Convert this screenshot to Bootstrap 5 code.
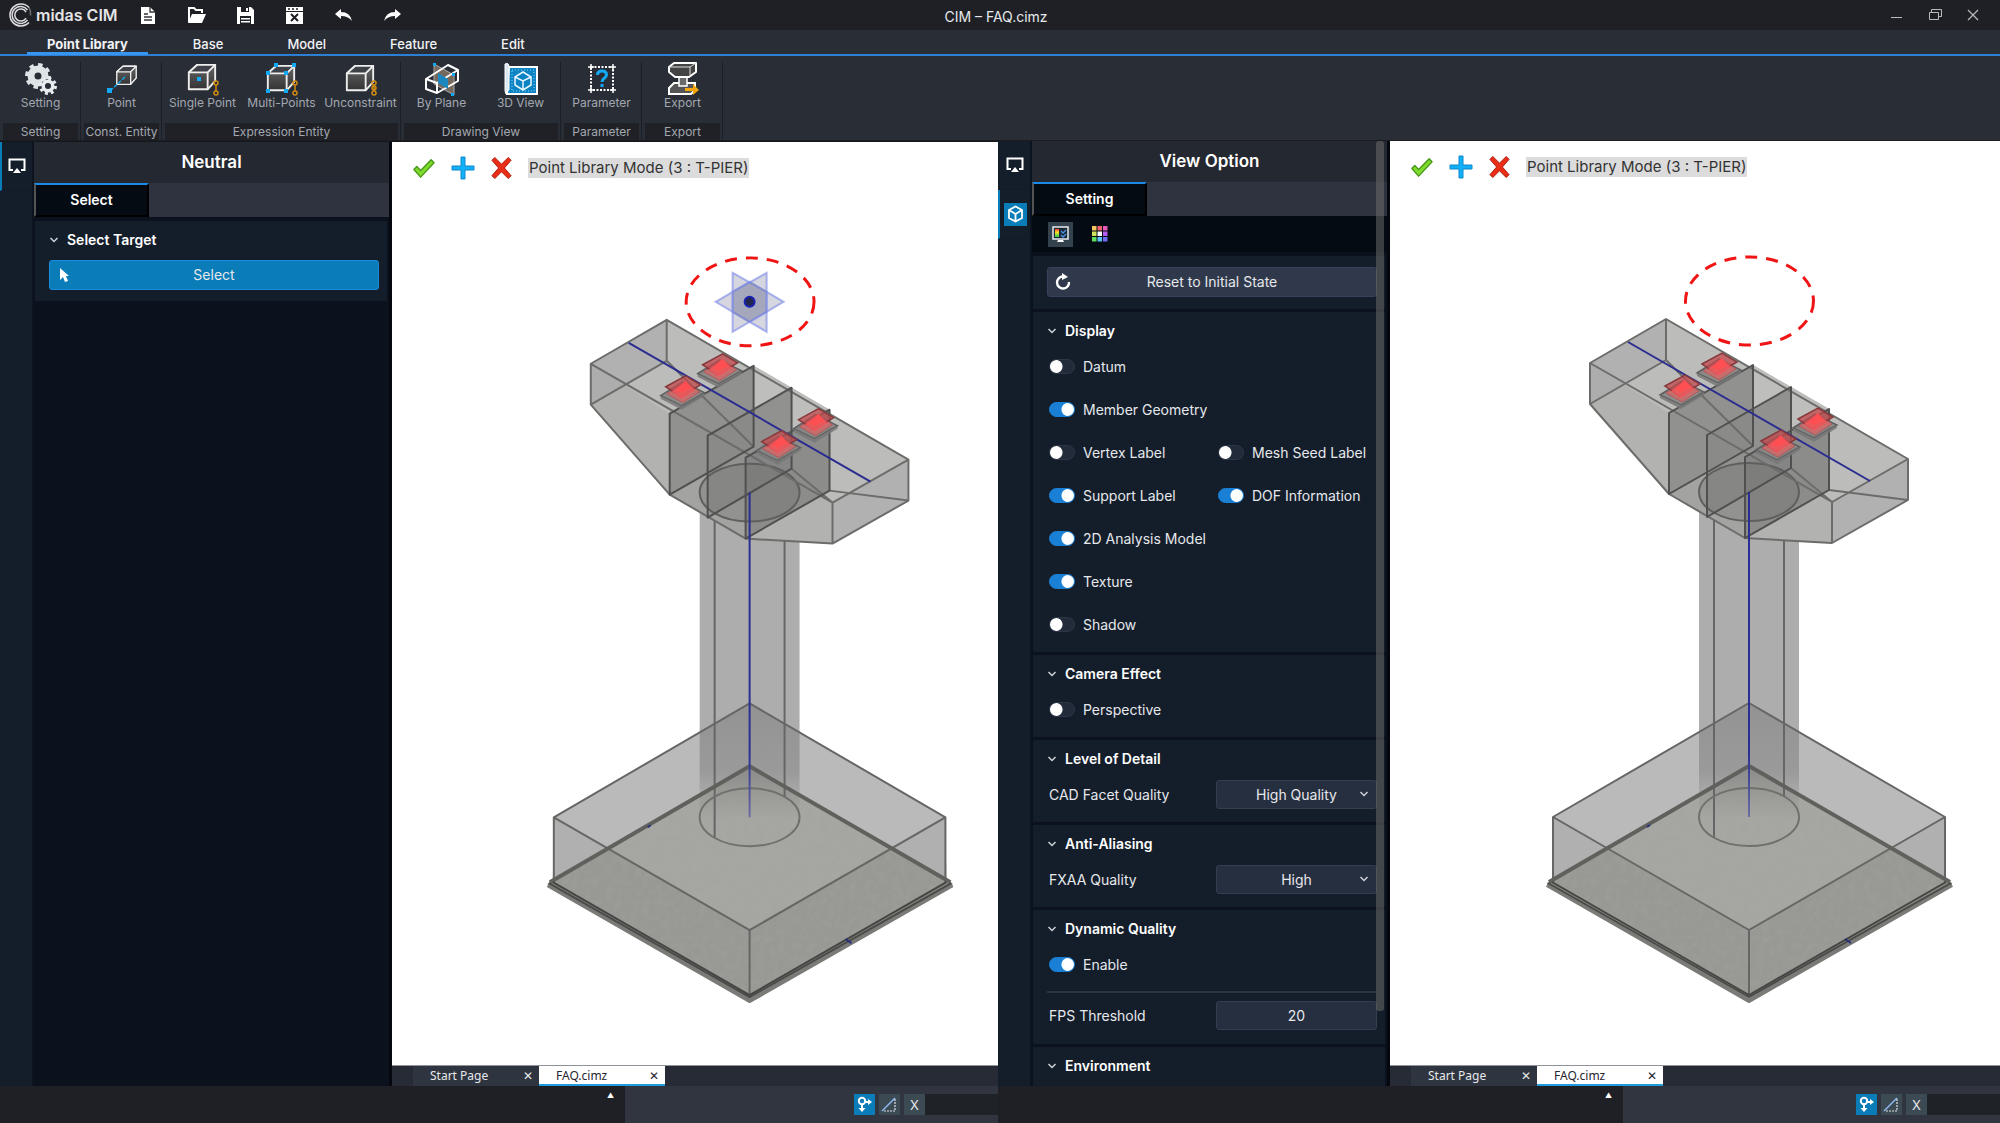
<!DOCTYPE html>
<html lang="en">
<head>
<meta charset="utf-8">
<meta name="viewport" content="width=device-width, initial-scale=1">
<title>CIM – FAQ.cimz</title>
<link rel="stylesheet" href="https://cdn.jsdelivr.net/npm/bootstrap@5.3.0/dist/css/bootstrap.min.css">
<style>
:root{--blue:#1b8ae6;--fill:#0a7cb8;--panel:#141e2b;--ink:#0b121d;--bar:#292d36;--night:#1f2025}
body{font-family:Inter,"Liberation Sans",sans-serif;font-size:13px;line-height:20px;color:#e6e8eb;background:var(--night);overflow:hidden}
button,input,select{font:inherit;color:inherit}
svg{display:block;flex:none}
.plain{background:none;border:0;padding:0}
.iconbtn{display:grid;place-items:center}
.titlebar{height:30px;background:var(--night)}
.apptitle{font-size:14px}
.side{flex:1 1 0}
.brand{font-size:16px;font-weight:600;color:#e4e4e6;width:83px}
.quick{width:49px;height:30px}
.wbtn{width:38px;height:30px}
.tabs-main{height:26px;background:var(--bar);border-bottom:2px solid #2c7fd2;gap:26px;padding-left:27px}
.tabs-main a{padding:0 19px;color:#f2f3f5;font-size:13px;line-height:28px;height:25px;text-decoration:none;font-weight:500}
.tabs-main a.active{border-bottom:3px solid #3794ef;font-weight:700;padding:0 20px}
.ribbon{height:85px;background:var(--bar);border-bottom:1px solid #1b1c20;padding:6px 0 0}
.rgroup{border-right:1px solid #1c1f26;padding-left:1px}
.rgroup button{width:79px;color:#a3a8b0;font-size:12px;line-height:14px}
.rgroup .cap{margin:0 2px;background:#202127;color:#a3a8b0;font-size:12px;line-height:17px}
.pane{flex:998 1 0;min-width:0}
.pane.second{flex-grow:1002}
.rail{width:33px;background:var(--panel);border-right:1px solid #0d1520}
.rail button{height:49px;border-bottom:1px solid #111a26;border-left:2px solid transparent;width:100%}
.rail button.on{border-left-color:var(--fill)}
.cubebox{background:var(--fill);width:23px;height:23px}
.dock{width:359px;background:var(--ink);border-right:3px solid #05080e;padding-left:1px}
.dock h1{height:41px;background:#242830;font-size:17px;font-weight:600;color:#fff}
.docktabs{background:#2e333f;height:34px}
.docktabs button{width:115px;background:#040b13;border-top:2px solid var(--blue);font-size:14px;font-weight:600;color:#fff}
.sect{background:var(--panel);margin:0 2px 0 1px;padding:0 8px 11px 14px}
.sect.reset{padding-top:11px;padding-bottom:12px}
.sect.fps{padding-bottom:14px}
.stack{gap:3px}
.sect h2{font-size:14px;font-weight:600;color:#fff;height:38px;gap:8px}
.wide{height:30px;border-radius:3px;background:#30394c;border:1px solid #374258;font-size:14px;width:100%}
.wide.blue{background:var(--fill);border-color:#198ce0;margin-top:1px}
.wide svg{margin-left:6px;width:18px}
.rows{gap:10px}
.srow{height:33px}
.srow .half{width:169px}
.form-switch.sw{padding:0;margin:0;min-height:0;display:flex;align-items:center;gap:8px}
.form-switch.sw .form-check-input{margin:0 0 0 2px;float:none;width:26px;height:15px;border:1px solid #2d3748;background-color:#222b3a;background-image:radial-gradient(circle at 6px 50%,#fff 6px,transparent 7px);background-position:0 0;background-size:100% 100%;flex:none}
.form-switch.sw .form-check-input:checked{background-color:#1a80d5;border-color:#1a80d5;background-image:radial-gradient(circle at 18px 50%,#fff 6px,transparent 7px)}
.sw label,.flabel{font-size:14px}
.flabel{padding-left:2px}
.fld{width:161px;height:29px;border:1px solid #333e50;border-radius:3px;background-color:#262f40;text-align:center;text-align-last:center;font-size:14px;padding:0}
select.fld{appearance:none;padding:0 2px}
.pick{position:relative}
.pick svg{position:absolute;right:8px;top:10px;pointer-events:none}
.rule{border-top:2px solid #2a3442;margin:10px 0 8px}
.minibar{height:36px;background:#040b13;gap:14px;padding-left:16px}
.minibar .on{background:#33424d}
.minibar button{width:25px;height:25px}
.thumb{position:absolute;right:3px;top:0;width:8px;height:870px;border-radius:3px;background:rgba(110,110,108,.52)}
.rdock{position:relative}
.scene{flex:1 1 0;min-height:0;background:#fff;position:relative}
.scene>svg{width:100%;height:100%}
.modebar{position:absolute;left:19px;top:14px;gap:15px}
.modebar span{background:#dcdcdc;color:#333;font-size:15px;line-height:20px;padding:0 1px}
.doctabs{height:21px;background:#272b35;border-top:1px solid #8f9299;padding-left:21px;font-family:"Noto Sans",sans-serif;font-size:12px;line-height:20px}
.doctab{width:126px;background:#2f3540;padding:0 6px 0 17px}
.doctab.on{background:#fff;color:#26262e;border-bottom:2px solid #1f9bde}
.status{height:37px;background:#30353f}
.status .log{width:625px;background:var(--night)}
.status .log span{font-size:7px;line-height:20px;margin-right:11px;color:#fff;display:block}
.status button{width:21px;height:21px;background:#3c4a54}
.status button.lit{background:var(--fill)}
.status .cmd{width:73px;height:21px;background:#1f2328;border:0;padding:0 4px}
.tight{border-top:1px solid #14171d}
</style>
<script src="https://cdn.jsdelivr.net/npm/bootstrap@5.3.0/dist/js/bootstrap.bundle.min.js"></script>
</head>
<body class="vh-100 d-flex flex-column">

<svg width="0" height="0" class="position-absolute" aria-hidden="true">
<defs>
<linearGradient id="dk" x1="0" y1="0" x2="0" y2="1"><stop offset="0" stop-color="#666"/><stop offset="1" stop-color="#333"/></linearGradient>
<linearGradient id="heat" x1="0" y1="0" x2="0" y2="1"><stop offset="0" stop-color="#f33"/><stop offset=".4" stop-color="#fd2"/><stop offset="1" stop-color="#2c5"/></linearGradient>
<linearGradient id="axis" gradientUnits="userSpaceOnUse" x1="0" y1="492" x2="0" y2="818"><stop offset="0" stop-color="#2a2d94"/><stop offset=".8" stop-color="#2b2f92"/><stop offset="1" stop-color="#6d70a0"/></linearGradient>
<linearGradient id="colfade" gradientUnits="userSpaceOnUse" x1="0" y1="700" x2="0" y2="820"><stop offset="0" stop-color="#6e6e6e" stop-opacity=".52"/><stop offset=".6" stop-color="#6e6e6e" stop-opacity=".42"/><stop offset="1" stop-color="#777" stop-opacity="0"/></linearGradient>
<filter id="grain" x="0" y="0" width="1" height="1"><feTurbulence type="fractalNoise" baseFrequency=".14" numOctaves="4" seed="4"/><feColorMatrix values="0 0 0 0 .36  0 0 0 0 .36  0 0 0 0 .35  0 0 0 .9 -.36"/><feComposite in2="SourceGraphic" operator="in"/></filter>

<symbol id="chev" viewBox="0 0 10 8"><path d="M1.500 2 5 5.500 8.500 2" fill="none" stroke="#cdd2d8" stroke-width="1.500"/></symbol>
<symbol id="screen" viewBox="0 0 18 16"><path d="M5 12H1.500V1.500h15V12H13" fill="none" stroke="#fff" stroke-width="2"/><path d="M9 10l4 5H5z" fill="#fff"/></symbol>
<symbol id="tick" viewBox="0 0 26 24"><path d="M3 13l3-3 4 4L21 3l3 3L10 21z" fill="#7fdc2c" stroke="#4b9a1c" stroke-width="1.500" stroke-linejoin="round"/></symbol>
<symbol id="plus" viewBox="0 0 24 24"><path d="M10 1h4v9h9v4h-9v9h-4v-9H1v-4h9z" fill="#12b0f8" stroke="#1187c9" stroke-width="1" stroke-linejoin="round"/></symbol>
<symbol id="cross" viewBox="0 0 24 24"><path d="M2 4l3-3 7 7 7-7 3 3-7 8 7 8-3 3-7-7-7 7-3-3 7-8z" fill="#ea2d17" stroke="#a81c10" stroke-width="1" stroke-linejoin="round"/></symbol>
<symbol id="node" viewBox="0 0 21 21"><g fill="none" stroke="#fff" stroke-width="2"><circle cx="8" cy="7" r="3.200"/><path d="M11 8h4M8 11v5"/></g><path d="M14 5l4 3-4 3zM4.500 14h7L8 18z" fill="#fff"/></symbol>
<symbol id="slope" viewBox="0 0 21 21"><path d="M3 17L16 4" stroke="#8db9f0" stroke-width="1.500"/><path d="M16 5v12H4" fill="none" stroke="#dde2e6" stroke-width="1.200" stroke-dasharray="2 1"/></symbol>
<symbol id="box" viewBox="0 0 36 34"><path d="M4 11 13 3h19v17l-8 9H4z" fill="url(#dk)" stroke="#eee" stroke-width="2" stroke-linejoin="round"/><path d="M4 11 13 3h19l-8 8z" fill="#3e4147" stroke="#eee" stroke-width="2" stroke-linejoin="round"/><path d="M24 11v18" stroke="#eee" stroke-width="2"/></symbol>
<symbol id="chain" viewBox="0 0 8 16"><g fill="none" stroke="#d18b12" stroke-width="1.500"><circle cx="4" cy="3" r="2"/><circle cx="4" cy="13" r="2"/><path d="M4 5v6"/></g></symbol>

<g id="bearing">
<path d="M-22 8 0-6 22 5-1 18z" fill="#858585" fill-opacity=".9" stroke="#5e5e5e" stroke-width="1.500"/>
<path d="M-22 8-1 18 22 5v3L-1 22-22 11z" fill="#777" fill-opacity=".85"/>
<path d="M-16 6 2-6 17 4 0 15z" fill="#c66e6e" stroke="#b05a5a"/>
<path d="M-17-1 3-12 18-3-2 9z" fill="#c24a4d" fill-opacity=".75" stroke="#87393b" stroke-width="1.500"/>
<path d="M-11 4 2-5 13 2-1 11z" fill="#ee5a5d" fill-opacity=".9"/>
<path d="M-7 2 3-7 9 0-1 5z" fill="#ff4f52"/>
</g>

<symbol id="pier" viewBox="392 141 606 924" preserveAspectRatio="xMinYMin meet">
<path d="M548 883 750 764 953 883v3L750 1002 548 886z" fill="#888883"/>
<path d="M553 882 750 766 947 882 750 995z" fill="#a6a6a2"/>
<path d="M553 882 554 817 750 703 946 817 947 882 750 766z" fill="#bababa"/>
<path d="M554 817 606 848 553 882zM946 817 894 848 947 882z" fill="#b0b0b0"/>
<path d="M606 848 750 930 894 848 947 882 750 995 553 882z" fill="#989894"/>
<path d="M553 882 750 766 947 882 750 995z" filter="url(#grain)" fill="#000"/>
<path d="M700 460H800V733L750 703 700 733z" fill="#adadad"/>
<path d="M700 733 750 703 800 733V817H700z" fill="url(#colfade)"/>
<g fill="none" stroke="#565654" stroke-width="2" stroke-linejoin="round">
<path d="M715 515V837M785 515V797" stroke="#666"/>
<ellipse cx="750" cy="817" rx="50" ry="29" stroke="#70706c"/>
<path d="M554 817 750 703 946 817 750 930zM554 817V882M946 817V882M750 930V995" stroke="#666664"/>
<path d="M550 882 750 766 951 882" stroke="#60605d" stroke-width="4"/>
<path d="M553 882 750 995 947 882" stroke="#454543"/>
<path d="M548 885 750 1001 953 885" stroke="#7a7a77" stroke-width="4"/>
<path d="M549 883 750 997 952 883" stroke="#4a4a48"/>
</g>
<path d="M846 939l6 4M648 827l3-2" stroke="#28307f" stroke-width="2"/>
<path d="M667 319 909 459V500L833 543 746 538 670 494 591 404V363z" fill="#bcbcba"/>
<path d="M591 363 667 319V360L591 404zM833 502 909 459V500L833 543z" fill="#b1b1b1"/>
<path d="M591 363 670 413V494L591 404zM746 457 833 502V543L746 538z" fill="#aaa" fill-opacity=".55"/>
<path d="M670 413 754 365 792 387 830 409V490L746 538 670 494z" fill="#a3a3a2"/>
<path d="M670 413 754 365V446L670 494z" fill="#8b8b8a" fill-opacity=".75"/>
<path d="M708 435 792 387V468L708 517z" fill="#858584" fill-opacity=".6"/>
<path d="M746 457 830 409V490L746 538z" fill="#80807f" fill-opacity=".65"/>
<path d="M754 365 792 387 754 410z" fill="#bebebc"/><path d="M792 387 830 409 792 432z" fill="#bebebc"/>
<ellipse cx="750" cy="492" rx="50" ry="29" fill="#6d6d6b" fill-opacity=".3" stroke="#5f5f5d" stroke-width="2"/>
<g fill="none" stroke="#6c6c6a" stroke-width="2" stroke-linejoin="round">
<path d="M667 319 909 459 833 502 591 363zM591 363V404L670 494 746 538 833 543 909 500V459M833 502V543M667 319V360L591 404M667 360 754 446M830 490 909 500M792 468 833 502"/>
<path d="M670 413 754 365V446L670 494zM708 435 792 387V468L708 517zM746 457 830 409V490L746 538z" stroke="#505050"/>
</g>
<path d="M749 492h2v325h-2z" fill="url(#axis)"/>
<path d="M629 342 871 481" stroke="#2a2d8f" stroke-width="2"/>
<use href="#bearing" x="720" y="365"/><use href="#bearing" x="683" y="387"/><use href="#bearing" x="816" y="420"/><use href="#bearing" x="779" y="442"/>
<ellipse cx="750.500" cy="301" rx="64" ry="44" fill="none" stroke="#f01414" stroke-width="3" stroke-dasharray="12 9"/>
</symbol>
<g id="origin" fill="#7d81a0" fill-opacity=".32" stroke="#7f8de8" stroke-opacity=".65" stroke-width="2">
<path d="M716 301 750 281 784 301 750 321z"/><path d="M733 272 767 291V331L733 311z"/><path d="M767 272 733 291V331L767 311z"/>
<circle cx="750" cy="301" r="5" fill="#22264e" fill-opacity="1" stroke="#1a22b8" stroke-opacity="1"/>
</g>
</defs>
</svg>

<header class="flex-shrink-0">
<div class="titlebar d-flex align-items-center">
<div class="side d-flex align-items-center">
<svg class="ms-2" width="24" height="26" viewBox="0 0 24 26" fill="none" stroke="#dcdce0" stroke-width="1.500"><path d="M21 5.500A11 11 0 1 0 21 20.500M19.500 8A8.500 8.500 0 1 0 19.500 18M18 10A6 6 0 1 0 18 16"/><path d="M21 5.500q2 3 1.500 8" stroke-opacity=".4"/></svg>
<span class="brand ms-1 text-nowrap">midas CIM</span>
<div class="d-flex ms-1">
<button class="plain quick iconbtn" aria-label="New"><svg width="14" height="17" viewBox="0 0 14 17"><path d="M0 0h9l5 5v12H0z" fill="#fff"/><path d="M9 0v5h5M3 7h4M3 10h8M3 13h8" stroke="#34353a" stroke-width="1.300" fill="none"/></svg></button>
<button class="plain quick iconbtn" aria-label="Open"><svg width="18" height="16" viewBox="0 0 18 16"><path d="M1 15V1h5l2 2h6v3" fill="none" stroke="#fff" stroke-width="2"/><path d="M4 7h14l-4 9H0z" fill="#fff"/></svg></button>
<button class="plain quick iconbtn" aria-label="Save"><svg width="17" height="17" viewBox="0 0 17 17"><path d="M0 0h14l3 3v14H0z" fill="#fff"/><path d="M4 0h8v5H4zM3 9h11v8H3z" fill="#1f2025"/><path d="M9 1h2v3H9zM4 11h9v1.500H4zM4 14h9v1.500H4z" fill="#fff"/></svg></button>
<button class="plain quick iconbtn" aria-label="Close file"><svg width="17" height="17" viewBox="0 0 17 17"><path d="M0 0h17v17H0z" fill="#fff"/><path d="M0 4.500h17" stroke="#1f2025"/><path d="M2 2h2M6 2h2M10 2h2" stroke="#1f2025" stroke-width="1.500"/><path d="M5 7l7 7M12 7l-7 7" stroke="#1f2025" stroke-width="2"/></svg></button>
<button class="plain quick iconbtn" aria-label="Undo"><svg width="17" height="12" viewBox="0 0 17 12"><path d="M0 5 6 0v3q9 0 11 9Q13 7 6 7v3z" fill="#fff"/></svg></button>
<button class="plain quick iconbtn" aria-label="Redo"><svg width="17" height="12" viewBox="0 0 17 12"><path d="M17 5 11 0v3Q2 3 0 12 4 7 11 7v3z" fill="#fff"/></svg></button>
</div>
</div>
<div class="apptitle pt-1">CIM – FAQ.cimz</div>
<div class="side d-flex justify-content-end pe-2">
<button class="plain wbtn iconbtn" aria-label="Minimize"><svg width="12" height="12" viewBox="0 0 12 12"><path d="M0 8.500h11" stroke="#b9babd"/></svg></button>
<button class="plain wbtn iconbtn" aria-label="Restore"><svg width="13" height="12" viewBox="0 0 13 12" fill="none" stroke="#b9babd"><path d="M.5 3.500h9v7h-9zM2.500 3.500v-3h10v7h-3"/></svg></button>
<button class="plain wbtn iconbtn" aria-label="Close"><svg width="12" height="12" viewBox="0 0 12 12"><path d="M1 1l10 10M11 1 1 11" stroke="#b9babd" stroke-width="1.200"/></svg></button>
</div>
</div>
<nav class="tabs-main d-flex">
<a href="#" class="active">Point Library</a><a href="#">Base</a><a href="#">Model</a><a href="#">Feature</a><a href="#">Edit</a>
</nav>
<div class="ribbon d-flex">
<div class="rgroup d-flex flex-column justify-content-between"><div class="d-flex">
<button class="plain d-flex flex-column align-items-center"><svg width="34" height="34" viewBox="0 0 34 34"><circle cx="14" cy="14" r="7" fill="none" stroke="#dfe5e7" stroke-width="7"/><circle cx="14" cy="14" r="11" fill="none" stroke="#dfe5e7" stroke-width="4" stroke-dasharray="4.300 4.300"/><circle cx="24" cy="24" r="7" fill="#292d36"/><circle cx="24" cy="24" r="4.800" fill="none" stroke="#e7ecee" stroke-width="3.500"/><circle cx="24" cy="24" r="7.500" fill="none" stroke="#e7ecee" stroke-width="3" stroke-dasharray="3 2.900"/></svg>Setting</button>
</div><div class="cap text-center">Setting</div></div>
<div class="rgroup d-flex flex-column justify-content-between"><div class="d-flex">
<button class="plain d-flex flex-column align-items-center"><svg width="34" height="34" viewBox="0 0 34 34"><use href="#box" x="9" y="2" width="25" height="24"/><path d="M20 15 6 28" stroke="#16a6ee" stroke-width="1.500" stroke-dasharray="4 1.500"/><path d="M2 26h5v5H2z" fill="#12aaf6"/></svg>Point</button>
</div><div class="cap text-center">Const. Entity</div></div>
<div class="rgroup d-flex flex-column justify-content-between"><div class="d-flex">
<button class="plain d-flex flex-column align-items-center"><svg width="36" height="34" viewBox="0 0 36 34"><use href="#box" x="0" y="0" width="34" height="32"/><path d="M12 15h4v4h-4z" fill="#12aaf6"/><use href="#chain" x="27" y="18" width="8" height="16"/></svg>Single Point</button>
<button class="plain d-flex flex-column align-items-center"><svg width="36" height="34" viewBox="0 0 36 34"><use href="#box" x="0" y="1" width="34" height="32"/><path d="M2 9h4v4H2zM10 1h4v4h-4zM28 1h4v4h-4zM20 9h4v4h-4zM2 27h4v4H2zM20 27h4v4h-4z" fill="#12aaf6"/><use href="#chain" x="27" y="18" width="8" height="16"/></svg>Multi-Points</button>
<button class="plain d-flex flex-column align-items-center"><svg width="36" height="34" viewBox="0 0 36 34"><use href="#box" x="0" y="1" width="34" height="32"/><use href="#chain" x="27" y="18" width="8" height="16"/><circle cx="31" cy="26" r="2" fill="none" stroke="#d18b12" stroke-width="1.500"/></svg>Unconstraint</button>
</div><div class="cap text-center">Expression Entity</div></div>
<div class="rgroup d-flex flex-column justify-content-between"><div class="d-flex">
<button class="plain d-flex flex-column align-items-center"><svg width="36" height="34" viewBox="0 0 36 34"><path d="M10 2 30 13V33L10 22z" fill="#75695e" stroke="#aaa"/><path d="M2 17 24 3l10 5v11L13 31 2 27zM2 17l11 4v10M13 21 34 8" fill="none" stroke="#fff" stroke-width="2" stroke-linejoin="round"/><path d="M14 11 24 17v10l-10-6z" fill="#1c87be"/><path d="M9 1h3v3H9zM28 11h3v3h-3zM27 31h3v3h-3z" fill="#12aaf6"/></svg>By Plane</button>
<button class="plain d-flex flex-column align-items-center"><svg width="36" height="34" viewBox="0 0 36 34"><path d="M6 5h28v27H4z" fill="#0c84c4" stroke="#fff" stroke-width="2"/><path d="M2 2q4-2 4 3v23q-3 0-3 4-1-2-1-4z" fill="#dce8f0" stroke="#fff"/><rect x="9" y="8" width="22" height="21" fill="none" stroke="#8bd0f5" stroke-dasharray="1 2"/><path d="M12 15 20 10 28 15v8l-8 5-8-5zl8 4 8-4M20 19v9" fill="none" stroke="#e8f6ff" stroke-width="1.500"/></svg>3D View</button>
</div><div class="cap text-center">Drawing View</div></div>
<div class="rgroup d-flex flex-column justify-content-between"><div class="d-flex">
<button class="plain d-flex flex-column align-items-center"><svg width="34" height="34" viewBox="0 0 34 34"><path d="M6 5h22v23H6z" fill="none" stroke="#fff" stroke-width="2" stroke-dasharray="2 1.500"/><path d="M3 5h6M6 2v6M25 5h6M28 2v6M3 28h6M6 25v6M25 28h6M28 25v6" stroke="#fff" stroke-width="1.500"/><path d="M12.500 13q0-4 4.500-4t4.500 4c0 3-4.500 3-4.500 7M17 22v3" fill="none" stroke="#12aaf6" stroke-width="3"/></svg>Parameter</button>
</div><div class="cap text-center">Parameter</div></div>
<div class="rgroup d-flex flex-column justify-content-between"><div class="d-flex">
<button class="plain d-flex flex-column align-items-center"><svg width="34" height="34" viewBox="0 0 34 34"><path d="M3 26 8 21h21v7l-4 4H3z" fill="#555" stroke="#fff" stroke-width="2"/><path d="M13 12h8v12h-8z" fill="#6a6a6a" stroke="#fff" stroke-width="1.500"/><path d="M3 5 8 1h22v9l-7 5H9l-6-5z" fill="#444" stroke="#fff" stroke-width="2" stroke-linejoin="round"/><path d="M3 5h21l6-4M24 5v8" fill="none" stroke="#ddd"/><path d="M19 26h8v-4l6 6-6 5v-4h-8z" fill="#f3a50c"/></svg>Export</button>
</div><div class="cap text-center">Export</div></div>
</div>
</header>

<main class="d-flex flex-grow-1" style="min-height:0">

<section class="pane d-flex flex-column">
<div class="d-flex flex-grow-1 tight" style="min-height:0">
<div class="rail flex-shrink-0"><button class="plain on iconbtn" aria-label="Neutral"><svg width="18" height="16"><use href="#screen"/></svg></button></div>
<aside class="dock flex-shrink-0">
<h1 class="d-flex align-items-center justify-content-center m-0">Neutral</h1>
<div class="docktabs d-flex mb-1"><button type="button">Select</button></div>
<div class="sect"><h2 class="d-flex align-items-center m-0"><svg width="10" height="8"><use href="#chev"/></svg>Select Target</h2>
<button class="wide blue d-flex align-items-center p-0"><svg height="15" viewBox="0 0 18 15"><path d="M4 0v12l3-3 2 5 3-1-2-5h3z" fill="#fff"/></svg><span class="flex-grow-1 text-center pe-4">Select</span></button></div>
</aside>
<div class="d-flex flex-column flex-grow-1">
<div class="scene"><svg viewBox="392 141 606 924" preserveAspectRatio="xMinYMin meet" role="img" aria-label="T-pier model"><use href="#pier" x="392" y="141" width="606" height="924"/><use href="#origin"/></svg>
<div class="modebar d-flex align-items-center"><svg width="25" height="23"><use href="#tick"/></svg><svg width="24" height="24"><use href="#plus"/></svg><svg width="23" height="24"><use href="#cross"/></svg><span>Point Library Mode (3 : T-PIER)</span></div></div>
<div class="doctabs d-flex"><div class="doctab d-flex justify-content-between">Start Page<span>✕</span></div><div class="doctab on d-flex justify-content-between">FAQ.cimz<span>✕</span></div></div>
</div>
</div>
<footer class="status d-flex align-items-center flex-shrink-0"><div class="log h-100 text-end"><span>▲</span></div>
<div class="d-flex ms-auto"><button class="plain lit me-1" aria-label="Snap"><svg width="21" height="21"><use href="#node"/></svg></button><button class="plain me-1" aria-label="Slope"><svg width="21" height="21"><use href="#slope"/></svg></button><button class="plain">X</button><input class="cmd" aria-label="X coordinate"></div></footer>
</section>

<section class="pane second d-flex flex-column">
<div class="d-flex flex-grow-1" style="min-height:0">
<div class="rail flex-shrink-0"><button class="plain iconbtn" aria-label="Neutral"><svg width="18" height="16"><use href="#screen"/></svg></button><button class="plain on iconbtn" aria-label="View option"><span class="cubebox iconbtn"><svg width="17" height="18" viewBox="0 0 17 18"><path d="M8.500 1.500 15 5v8l-6.500 3.500L2 13V5zM2 5l6.500 4L15 5M8.500 9v7" fill="none" stroke="#fff" stroke-width="1.800"/></svg></span></button></div>
<aside class="dock rdock flex-shrink-0 overflow-hidden">
<h1 class="d-flex align-items-center justify-content-center m-0">View Option</h1>
<div class="docktabs d-flex"><button type="button">Setting</button></div>
<div class="minibar d-flex align-items-center">
<button class="plain on iconbtn" aria-label="Display"><svg width="17" height="17" viewBox="0 0 17 17"><path d="M1 1h15v12H1z" fill="#1b2733" stroke="#e9edef" stroke-width="1.500"/><path d="M3 3h4v8H3z" fill="url(#heat)"/><path d="M9 5l2 2 3-3M9 9l2 2 3-3" fill="none" stroke="#4c93e6" stroke-width="1.300"/><path d="M6 14h5l1 2H5z" fill="#fff"/></svg></button>
<button class="plain iconbtn" aria-label="Colours"><svg width="16" height="16"><path d="M0 0h4.500v4.500H0z" fill="#f5c563"/><path d="M5.500 0H10v4.500H5.500z" fill="#f0636b"/><path d="M11 0h4.500v4.500H11z" fill="#e75bb8"/><path d="M0 5.500h4.500V10H0z" fill="#cde35b"/><path d="M5.500 5.500H10V10H5.500z" fill="#fff"/><path d="M11 5.500h4.500V10H11z" fill="#b45bf0"/><path d="M0 11h4.500v4.500H0z" fill="#5fe05f"/><path d="M5.500 11H10v4.500H5.500z" fill="#5bc4f5"/><path d="M11 11h4.500v4.500H11z" fill="#6f6cf5"/></svg></button>
</div>
<div class="stack d-flex flex-column pt-1">
<div class="sect reset"><button class="wide d-flex align-items-center p-0"><svg height="18" viewBox="0 0 18 18"><path d="M9 3.500A6 6 0 1 0 15 9" fill="none" stroke="#fff" stroke-width="2.400"/><path d="M8 0l6 4-6 3z" fill="#fff"/></svg><span class="flex-grow-1 text-center pe-4">Reset to Initial State</span></button></div>
<div class="sect"><h2 class="d-flex align-items-center m-0"><svg width="10" height="8"><use href="#chev"/></svg>Display</h2>
<div class="rows d-flex flex-column">
<div class="srow d-flex align-items-center"><div class="form-check form-switch sw"><input class="form-check-input" type="checkbox" id="s1"><label for="s1">Datum</label></div></div>
<div class="srow d-flex align-items-center"><div class="form-check form-switch sw"><input class="form-check-input" type="checkbox" id="s2" checked><label for="s2">Member Geometry</label></div></div>
<div class="srow d-flex align-items-center"><div class="form-check form-switch sw half"><input class="form-check-input" type="checkbox" id="s3"><label for="s3">Vertex Label</label></div><div class="form-check form-switch sw"><input class="form-check-input" type="checkbox" id="s4"><label for="s4">Mesh Seed Label</label></div></div>
<div class="srow d-flex align-items-center"><div class="form-check form-switch sw half"><input class="form-check-input" type="checkbox" id="s5" checked><label for="s5">Support Label</label></div><div class="form-check form-switch sw"><input class="form-check-input" type="checkbox" id="s6" checked><label for="s6">DOF Information</label></div></div>
<div class="srow d-flex align-items-center"><div class="form-check form-switch sw"><input class="form-check-input" type="checkbox" id="s7" checked><label for="s7">2D Analysis Model</label></div></div>
<div class="srow d-flex align-items-center"><div class="form-check form-switch sw"><input class="form-check-input" type="checkbox" id="s8" checked><label for="s8">Texture</label></div></div>
<div class="srow d-flex align-items-center"><div class="form-check form-switch sw"><input class="form-check-input" type="checkbox" id="s9"><label for="s9">Shadow</label></div></div>
</div></div>
<div class="sect"><h2 class="d-flex align-items-center m-0"><svg width="10" height="8"><use href="#chev"/></svg>Camera Effect</h2>
<div class="srow d-flex align-items-center"><div class="form-check form-switch sw"><input class="form-check-input" type="checkbox" id="s10"><label for="s10">Perspective</label></div></div></div>
<div class="sect"><h2 class="d-flex align-items-center m-0"><svg width="10" height="8"><use href="#chev"/></svg>Level of Detail</h2>
<div class="srow d-flex align-items-center justify-content-between"><label class="flabel" for="q1">CAD Facet Quality</label><div class="pick"><select class="fld" id="q1"><option>High Quality</option></select><svg width="10" height="8"><use href="#chev"/></svg></div></div></div>
<div class="sect"><h2 class="d-flex align-items-center m-0"><svg width="10" height="8"><use href="#chev"/></svg>Anti-Aliasing</h2>
<div class="srow d-flex align-items-center justify-content-between"><label class="flabel" for="q2">FXAA Quality</label><div class="pick"><select class="fld" id="q2"><option>High</option></select><svg width="10" height="8"><use href="#chev"/></svg></div></div></div>
<div class="sect fps"><h2 class="d-flex align-items-center m-0"><svg width="10" height="8"><use href="#chev"/></svg>Dynamic Quality</h2>
<div class="srow d-flex align-items-center"><div class="form-check form-switch sw"><input class="form-check-input" type="checkbox" id="s11" checked><label for="s11">Enable</label></div></div>
<div class="rule"></div>
<div class="d-flex align-items-center justify-content-between"><label class="flabel" for="q3">FPS Threshold</label><input class="fld" id="q3" value="20"></div></div>
<div class="sect"><h2 class="d-flex align-items-center m-0"><svg width="10" height="8"><use href="#chev"/></svg>Environment</h2><div class="srow"></div></div>
</div>
<div class="thumb"></div>
</aside>
<div class="d-flex flex-column flex-grow-1">
<div class="scene"><svg viewBox="391 141 606 924" preserveAspectRatio="xMinYMin meet" role="img" aria-label="T-pier model"><use href="#pier" x="392" y="141" width="606" height="924"/></svg>
<div class="modebar d-flex align-items-center"><svg width="25" height="23"><use href="#tick"/></svg><svg width="24" height="24"><use href="#plus"/></svg><svg width="23" height="24"><use href="#cross"/></svg><span>Point Library Mode (3 : T-PIER)</span></div></div>
<div class="doctabs d-flex"><div class="doctab d-flex justify-content-between">Start Page<span>✕</span></div><div class="doctab on d-flex justify-content-between">FAQ.cimz<span>✕</span></div></div>
</div>
</div>
<footer class="status d-flex align-items-center flex-shrink-0"><div class="log h-100 text-end"><span>▲</span></div>
<div class="d-flex ms-auto"><button class="plain lit me-1" aria-label="Snap"><svg width="21" height="21"><use href="#node"/></svg></button><button class="plain me-1" aria-label="Slope"><svg width="21" height="21"><use href="#slope"/></svg></button><button class="plain">X</button><input class="cmd" aria-label="X coordinate"></div></footer>
</section>
</main>
</body>
</html>
